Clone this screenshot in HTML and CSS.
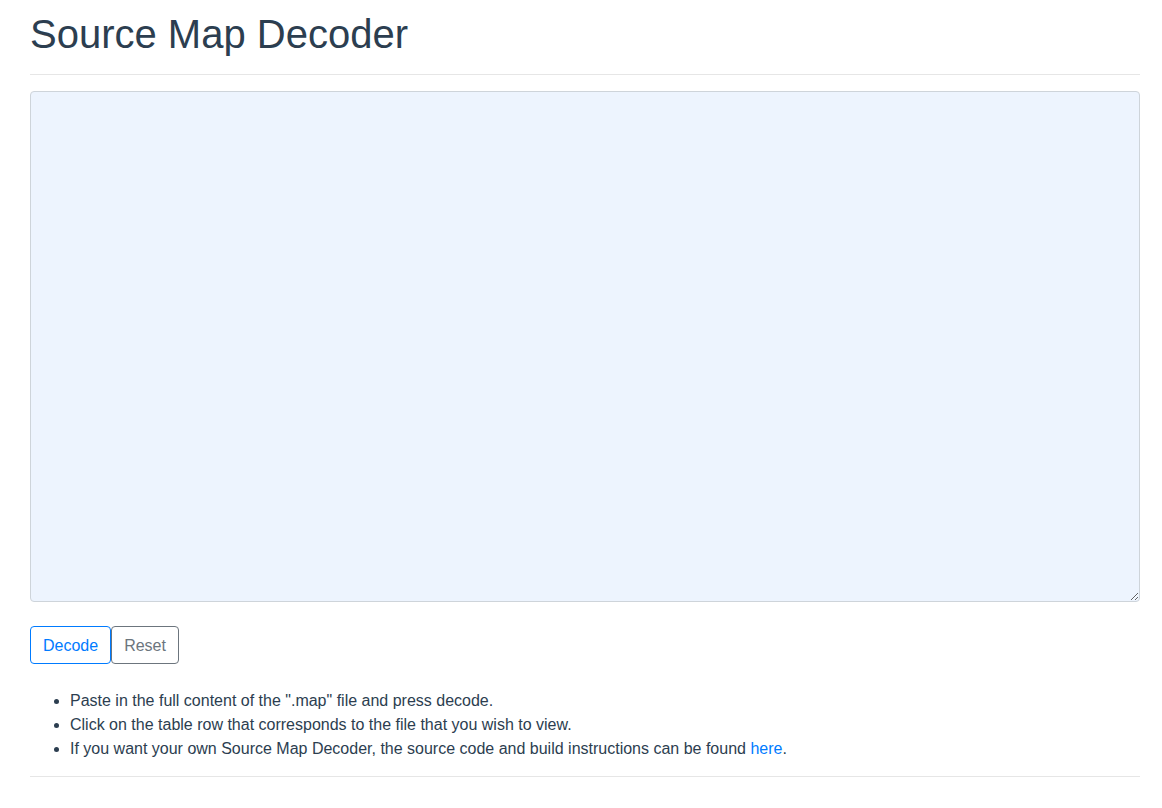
FILE: index.html
```html
<!DOCTYPE html>
<html lang="en">
<head>
<meta charset="utf-8">
<title>Source Map Decoder</title>
<link rel="stylesheet" href="styles.css">
</head>
<body>
<div class="container">
  <h1 class="title">Source Map Decoder</h1>
  <hr class="rule">
  <textarea class="input"></textarea>
  <div class="actions">
    <button class="btn btn-primary">Decode</button><button class="btn btn-secondary">Reset</button>
  </div>
  <ul class="notes">
    <li>Paste in the full content of the ".map" file and press decode.</li>
    <li>Click on the table row that corresponds to the file that you wish to view.</li>
    <li>If you want your own Source Map Decoder, the source code and build instructions can be found <a href="#">here</a>.</li>
  </ul>
  <hr class="rule bottom">
</div>
</body>
</html>
```
FILE: styles.css
```css
* { box-sizing: border-box; }
html, body { margin: 0; padding: 0; background: #fff; }
body {
  font-family: "Liberation Sans", Arial, sans-serif;
  font-size: 16px;
  line-height: 24px;
  color: #2c3e50;
}
.container { padding: 0 22px 0 30px; }
.title {
  margin: 10px 0 16px;
  font-size: 40px;
  line-height: 48px;
  font-weight: 400;
  color: #2c3e50;
}
.rule {
  margin: 0 0 16px;
  border: 0;
  border-top: 1px solid #e6e6e6;
  height: 0;
}
.rule.bottom { margin-top: 15px; }
.input {
  display: block;
  width: 100%;
  height: 511px;
  margin: 0;
  background: #edf4fe;
  border: 1px solid #ced4da;
  border-radius: 4px;
  padding: 6px 12px;
  font-family: inherit;
  font-size: 16px;
  color: #2c3e50;
}
.actions { display: flex; margin-top: 24px; }
.btn {
  font-family: inherit;
  font-size: 16px;
  line-height: 24px;
  padding: 7px 12px 5px;
  background: #fff;
  border: 1px solid;
  border-radius: 4px;
  cursor: pointer;
}
.btn-primary { color: #007bff; border-color: #007bff; }
.btn-secondary { color: #6c757d; border-color: #6c757d; }
.notes { margin: 25px 0 0; padding-left: 40px; }
.notes a { color: #007bff; text-decoration: none; }
```
